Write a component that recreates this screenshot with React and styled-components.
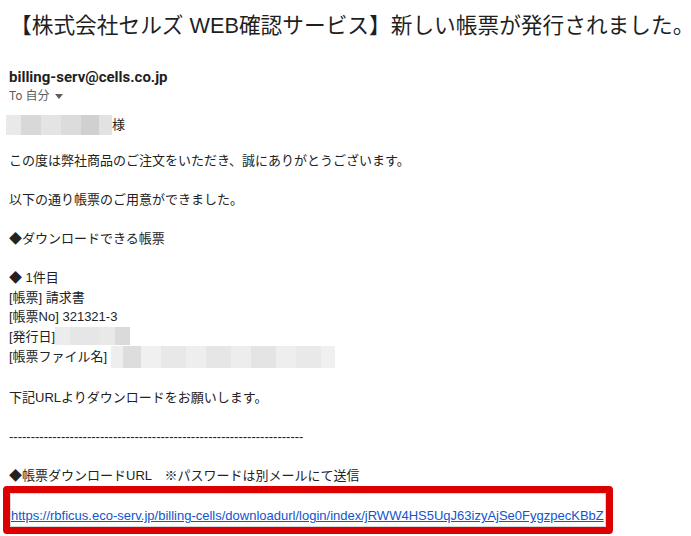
import React from "react";
import styled, { createGlobalStyle } from "styled-components";

const Global = createGlobalStyle`
  html, body { margin: 0; padding: 0; background: #fff; }
  body { font-family: "Liberation Sans", Arial, "Noto Sans CJK JP", sans-serif; color: #222; }
`;

const Page = styled.div`
  width: 691px;
  height: 536px;
  overflow: hidden;
  padding-left: 9px;
  box-sizing: border-box;
`;

const Title = styled.h1`
  margin: 12px 0 0 1px;
  font-family: "Liberation Sans", "Noto Sans CJK JP", sans-serif;
  font-weight: 400;
  font-size: 21.7px;
  line-height: 28px;
  color: #1f1f1f;
  white-space: nowrap;
`;

const Sender = styled.div`
  margin-top: 27px;
  font-family: Roboto, "Liberation Sans", sans-serif;
  font-weight: 700;
  font-size: 15px;
  line-height: 20px;
  color: #1f1f1f;
`;

const ToLine = styled.div`
  display: flex;
  align-items: center;
  gap: 4px;
  font-family: Roboto, "Noto Sans CJK JP", sans-serif;
  font-size: 12px;
  line-height: 18px;
  color: #5e5e5e;
`;

const Caret = styled.svg`
  width: 8px;
  height: 5px;
  margin-left: 2px;
`;

const Greeting = styled.div`
  margin-top: 10px;
  margin-left: -3px;
  display: flex;
  align-items: center;
  font-size: 13px;
  line-height: 20px;
  height: 20px;
`;

const Blur = styled.span`
  display: inline-flex;
  height: ${(p) => p.$h || 20}px;
  vertical-align: middle;
`;

const Seg = styled.span`
  display: block;
  width: ${(p) => p.$w}px;
  height: 100%;
  background: ${(p) => p.$c};
`;

const Body = styled.div`
  margin-top: 16px;
  font-size: 13px;
  line-height: 19.5px;
  color: #222;
`;

const Line = styled.div`
  min-height: 19.5px;
  white-space: nowrap;
  display: flex;
  align-items: center;
`;

const LinkBox = styled.div`
  margin-top: 1px;
  margin-left: -6px;
  width: 610px;
  height: 48px;
  box-sizing: border-box;
  border: 7px solid #dd0000;
  border-radius: 4px;
  box-shadow: inset 0 0 0 1px #d6d6d6;
  padding: 13px 0 0 1px;
  overflow: hidden;
`;

const Link = styled.a`
  font-size: 13px;
  line-height: 19px;
  color: #1155cc;
  text-decoration: underline;
  white-space: nowrap;
`;

const nameSegs = [
  ["#e9e9e9", 15],
  ["#d8d8d8", 20],
  ["#e4e4e4", 20],
  ["#dcdcdc", 20],
  ["#d0d0d0", 18],
  ["#e2e2e2", 13],
];

const dateSegs = [
  ["#ececec", 15],
  ["#e6e6e6", 30],
  ["#e9e9e9", 15],
  ["#dadada", 15],
];

const fileSegs = [
  ["#eeeeee", 12],
  ["#dddddd", 18],
  ["#f0f0f0", 20],
  ["#e8e8e8", 25],
  ["#eeeeee", 20],
  ["#e6e6e6", 25],
  ["#ededed", 20],
  ["#e4e4e4", 25],
  ["#eeeeee", 20],
  ["#e9e9e9", 25],
  ["#f0f0f0", 14],
];

const Blurred = ({ segs, h }) => (
  <Blur $h={h}>
    {segs.map(([c, w], i) => (
      <Seg key={i} $c={c} $w={w} />
    ))}
  </Blur>
);

export default function App() {
  return (
    <>
      <Global />
      <Page>
        <Title>【株式会社セルズ WEB確認サービス】新しい帳票が発行されました。</Title>
        <Sender>billing-serv@cells.co.jp</Sender>
        <ToLine>
          <span>To 自分</span>
          <Caret viewBox="0 0 8 5">
            <path d="M0 0 L8 0 L4 5 Z" fill="#5e5e5e" />
          </Caret>
        </ToLine>
        <Greeting>
          <Blurred segs={nameSegs} h={20} />
          <span>様</span>
        </Greeting>
        <Body>
          <Line>この度は弊社商品のご注文をいただき、誠にありがとうございます。</Line>
          <Line />
          <Line>以下の通り帳票のご用意ができました。</Line>
          <Line />
          <Line>◆ダウンロードできる帳票</Line>
          <Line />
          <Line>◆ 1件目</Line>
          <Line>[帳票] 請求書</Line>
          <Line>[帳票No] 321321-3</Line>
          <Line>
            [発行日]
            <Blurred segs={dateSegs} h={18} />
          </Line>
          <Line>
            [帳票ファイル名]&nbsp;<Blurred segs={fileSegs} h={22} />
          </Line>
          <Line />
          <Line>下記URLよりダウンロードをお願いします。</Line>
          <Line />
          <Line>--------------------------------------------------------------------</Line>
          <Line />
          <Line>◆帳票ダウンロードURL　※パスワードは別メールにて送信</Line>
        </Body>
        <LinkBox>
          <Link href="#">https://rbficus.eco-serv.jp/billing-cells/downloadurl/login/index/jRWW4HS5UqJ63izyAjSe0FygzpecKBbZ</Link>
        </LinkBox>
      </Page>
    </>
  );
}
